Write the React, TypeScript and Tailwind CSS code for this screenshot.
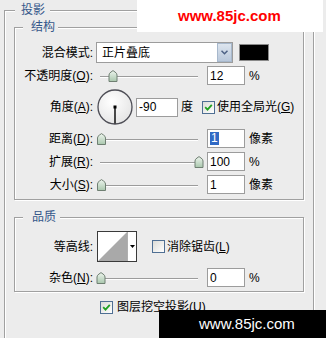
import type { ReactNode } from 'react';

function Thumb({ x }: { x: number }) {
  return (
    <g transform={`translate(${x - 4.5} 4)`}>
      <path
        d="M0.5 11.5 V5 Q0.5 3.2 2.5 2 L4.5 0.6 L6.5 2 Q8.5 3.2 8.5 5 V11.5 Z"
        fill="url(#thumbFill)"
        stroke="#6f7f72"
      />
    </g>
  );
}

function Slider({ pos }: { pos: number }) {
  return (
    <svg width="108" height="20" className="shrink-0 ml-[3px]">
      <defs>
        <linearGradient id="thumbFill" x1="0" y1="0" x2="0" y2="1">
          <stop offset="0" stopColor="#eef5ee" />
          <stop offset="1" stopColor="#a9c7ad" />
        </linearGradient>
      </defs>
      <line x1="4" y1="10.5" x2="102" y2="10.5" stroke="#9c9c9c" />
      <line x1="4" y1="11.5" x2="102" y2="11.5" stroke="#ffffff" />
      <Thumb x={pos} />
    </svg>
  );
}

function Field({ value, w = 38, selected = false, className = '' }: { value: string; w?: number; selected?: boolean; className?: string }) {
  return (
    <div
      className={`h-[19px] border border-[#9c9c9c] bg-white flex items-center pl-[2px] shrink-0 ${className}`}
      style={{ width: w }}
    >
      {selected ? <span className="bg-[#316ac5] text-white leading-[13px] px-px">{value}</span> : value}
    </div>
  );
}

function Check({ checked }: { checked: boolean }) {
  return (
    <span className="w-[13px] h-[13px] border border-[#4f6f93] bg-linear-to-br from-[#dcdcd7] to-white flex items-center justify-center shrink-0">
      {checked && (
        <svg width="9" height="9" viewBox="0 0 9 9">
          <path d="M1.2 4.2 L3.5 6.6 L7.8 1.8" fill="none" stroke="#21a121" strokeWidth="1.8" />
        </svg>
      )}
    </span>
  );
}

function Row({ label, h = 23, children }: { label: ReactNode; h?: number; children: ReactNode }) {
  return (
    <div className="flex items-center" style={{ height: h }}>
      <div className="w-[78px] text-right shrink-0 whitespace-nowrap">{label}</div>
      {children}
    </div>
  );
}

function Dial() {
  return (
    <svg width="36" height="36" className="shrink-0 ml-[4px]">
      <defs>
        <radialGradient id="dialFill" cx="0.4" cy="0.35" r="0.7">
          <stop offset="0" stopColor="#ffffff" />
          <stop offset="1" stopColor="#e4e4e4" />
        </radialGradient>
      </defs>
      <circle cx="18" cy="18" r="17" fill="url(#dialFill)" stroke="#4d4d55" strokeWidth="1.3" />
      <rect x="16.5" y="16.5" width="3" height="3" fill="#000" />
      <line x1="18" y1="18" x2="18" y2="34.5" stroke="#000" strokeWidth="1.4" />
    </svg>
  );
}

export default function App() {
  return (
    <div className='relative w-[326px] h-[338px] overflow-hidden bg-[#ececec] text-[12px] text-black font-["Liberation_Sans","Noto_Sans_CJK_SC",sans-serif]'>
      <fieldset className="ml-[4px] mt-[3px] w-[310px] h-[345px] border border-[#a0a0a0] shadow-[inset_1px_1px_0_#fff,1px_1px_0_#fff] p-0">
        <legend className="ml-[10px] pl-[6px] pr-[5px] leading-[14px] text-[#35578a] bg-[#ececec]">投影</legend>

        {/* 结构 */}
        <fieldset className="ml-[9px] mt-[3px] w-[290px] border border-[#a0a0a0] shadow-[inset_1px_1px_0_#fff,1px_1px_0_#fff] p-0 pt-[7px] pb-[3px]">
          <legend className="ml-[8px] pl-[8px] pr-[3px] leading-[14px] text-[#35578a] bg-[#ececec]">结构</legend>

          <Row label="混合模式:">
            <div className="ml-[3px] w-[137px] h-[21px] border border-[#9c9c9c] bg-white flex items-center justify-between shrink-0">
              <span className="pl-[5px]">正片叠底</span>
              <span className="w-[15px] h-[19px] bg-linear-to-b from-[#dde5ee] to-[#b9c8db] border border-[#a7b8cc] flex items-center justify-center">
                <svg width="7" height="5" viewBox="0 0 7 5">
                  <path d="M0.5 0.8 L3.5 3.8 L6.5 0.8" fill="none" stroke="#4d6185" strokeWidth="1.5" />
                </svg>
              </span>
            </div>
            <div className="ml-[6px] w-[30px] h-[17px] bg-black border border-[#8a8a8a] shrink-0" />
          </Row>

          <Row label={<>不透明度(<u>O</u>):</>}>
            <Slider pos={17} />
            <Field value="12" className="ml-[3px]" />
            <span className="ml-[4px]">%</span>
          </Row>

          <Row label={<>角度(<u>A</u>):</>} h={40}>
            <Dial />
            <Field value="-90" w={42} className="ml-[3px]" />
            <span className="ml-[3px]">度</span>
            <span className="ml-[9px]">
              <Check checked />
            </span>
            <span className="ml-[2px] whitespace-nowrap">使用全局光(<u>G</u>)</span>
          </Row>

          <Row label={<>距离(<u>D</u>):</>}>
            <Slider pos={5.5} />
            <Field value="1" selected className="ml-[3px]" />
            <span className="ml-[4px]">像素</span>
          </Row>

          <Row label={<>扩展(<u>R</u>):</>}>
            <Slider pos={103} />
            <Field value="100" className="ml-[3px]" />
            <span className="ml-[4px]">%</span>
          </Row>

          <Row label={<>大小(<u>S</u>):</>}>
            <Slider pos={5.5} />
            <Field value="1" className="ml-[3px]" />
            <span className="ml-[4px]">像素</span>
          </Row>
        </fieldset>

        {/* 品质 */}
        <fieldset className="ml-[9px] mt-[10px] w-[290px] border border-[#a0a0a0] shadow-[inset_1px_1px_0_#fff,1px_1px_0_#fff] p-0 pt-[7px] pb-[2px]">
          <legend className="ml-[8px] pl-[9px] pr-[4px] leading-[14px] text-[#35578a] bg-[#ececec]">品质</legend>

          <Row label="等高线:" h={31}>
            <div className="ml-[4px] w-[40px] h-[31px] border border-[#3a3a3a] bg-white flex shrink-0">
              <svg width="29" height="29" className="shrink-0">
                <polygon points="0,29 29,0 29,29" fill="#a9a9a9" />
              </svg>
              <div className="flex-1 border-l border-[#b0b0b0] flex items-center justify-center">
                <svg width="5" height="3" viewBox="0 0 5 3">
                  <path d="M0 0 H5 L2.5 3 Z" fill="#000" />
                </svg>
              </div>
            </div>
            <span className="ml-[15px]">
              <Check checked={false} />
            </span>
            <span className="ml-[2px] whitespace-nowrap">消除锯齿(<u>L</u>)</span>
          </Row>

          <div className="mt-[4px]">
            <Row label={<>杂色(<u>N</u>):</>}>
              <Slider pos={5} />
              <Field value="0" className="ml-[3px]" />
              <span className="ml-[4px]">%</span>
            </Row>
          </div>
        </fieldset>

        <div className="mt-[4px] ml-[95px] h-[22px] flex items-center">
          <Check checked />
          <span className="ml-[4px] whitespace-nowrap">图层挖空投影(<u>U</u>)</span>
        </div>
      </fieldset>

      {/* watermarks */}
      <div className="absolute left-[137px] top-0 w-[186px] h-[32px] bg-white flex items-center pl-[41px]">
        <span className='text-[15px] font-bold text-[#ff0000] font-["Liberation_Sans",sans-serif]'>www.85jc.com</span>
      </div>
      <div className="absolute left-[159px] top-[310px] w-[167px] h-[28px] bg-black flex items-center pl-[40px]">
        <span className='text-[15px] text-white font-["Liberation_Sans",sans-serif]'>www.85jc.com</span>
      </div>
    </div>
  );
}
